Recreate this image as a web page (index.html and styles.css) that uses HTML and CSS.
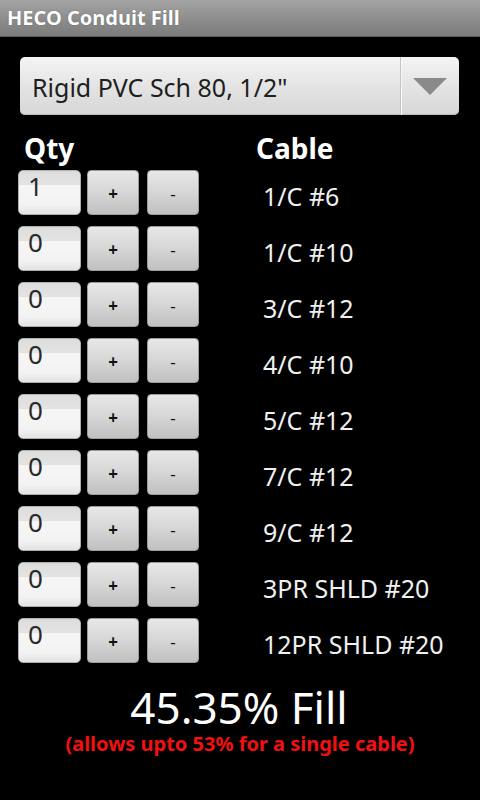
FILE: index.html
```html
<!DOCTYPE html>
<html>
<head>
<meta charset="utf-8">
<link rel="stylesheet" href="styles.css">
</head>
<body>
<div class="titlebar">HECO Conduit Fill</div>
<div class="spinner">
  <div class="spinner-text">Rigid PVC Sch 80, 1/2"</div>
  <div class="spinner-btn"><svg width="36" height="19" viewBox="0 0 36 19"><polygon points="1,1 35,1 18,18" fill="#8a8a8a"/></svg></div>
</div>
<div class="header"><span class="h-qty">Qty</span><span class="h-cable">Cable</span></div>
<div class="rows">
  <div class="row"><div class="field">1</div><div class="btn">+</div><div class="btn minus">-</div><div class="cable">1/C #6</div></div>
  <div class="row"><div class="field">0</div><div class="btn">+</div><div class="btn minus">-</div><div class="cable">1/C #10</div></div>
  <div class="row"><div class="field">0</div><div class="btn">+</div><div class="btn minus">-</div><div class="cable">3/C #12</div></div>
  <div class="row"><div class="field">0</div><div class="btn">+</div><div class="btn minus">-</div><div class="cable">4/C #10</div></div>
  <div class="row"><div class="field">0</div><div class="btn">+</div><div class="btn minus">-</div><div class="cable">5/C #12</div></div>
  <div class="row"><div class="field">0</div><div class="btn">+</div><div class="btn minus">-</div><div class="cable">7/C #12</div></div>
  <div class="row"><div class="field">0</div><div class="btn">+</div><div class="btn minus">-</div><div class="cable">9/C #12</div></div>
  <div class="row"><div class="field">0</div><div class="btn">+</div><div class="btn minus">-</div><div class="cable">3PR SHLD #20</div></div>
  <div class="row"><div class="field">0</div><div class="btn">+</div><div class="btn minus">-</div><div class="cable">12PR SHLD #20</div></div>
</div>
<div class="fill">45.35% Fill</div>
<div class="note">(allows upto 53% for a single cable)</div>
</body>
</html>
```
FILE: styles.css
```css
html, body {
  margin: 0;
  padding: 0;
  background: #000;
  width: 480px;
  height: 800px;
  overflow: hidden;
  font-family: "Noto Sans", "Open Sans", sans-serif;
}
.titlebar {
  background: linear-gradient(#a4a4a4, #8a8a8a 60%, #7c7c7c);
  border-bottom: 1px solid #5a5a5a;
  color: #fff;
  font-weight: bold;
  font-size: 20px;
  line-height: 36px;
  padding-left: 7px;
  box-sizing: border-box;
  height: 37px;
  text-shadow: 0 0 1px #555;
}
.spinner {
  margin: 20px 21px 0 20px;
  height: 58px;
  border-radius: 5px;
  background: linear-gradient(#f4f4f4, #e4e4e4 50%, #d6d6d6);
  display: flex;
  align-items: center;
  box-shadow: inset 0 -1px 0 #bcbcbc;
}
.spinner-text {
  flex: 1;
  padding-left: 12px;
  font-size: 25px;
  color: #1e1e1e;
  padding-top: 2px;
  white-space: nowrap;
}
.spinner-btn {
  width: 58px;
  height: 58px;
  border-left: 1px solid #c4c4c4;
  box-shadow: inset 1px 0 0 #f8f8f8;
  display: flex;
  align-items: center;
  justify-content: center;
}
.header {
  display: flex;
  margin-top: 15px;
  height: 36px;
  color: #fff;
  font-weight: bold;
  font-size: 28px;
  line-height: 36px;
}
.h-qty { margin-left: 24px; width: 232px; }
.rows {
  display: flex;
  flex-direction: column;
  gap: 11px;
  margin-top: 4px;
}
.row {
  display: flex;
  align-items: center;
  height: 45px;
  padding-left: 18px;
}
.field {
  width: 63px;
  height: 45px;
  box-sizing: border-box;
  border-radius: 5px;
  background: linear-gradient(#dcdcdc, #e4e4e4 32%, #f6f6f6 34%, #f2f2f2 80%, #e2e2e2);
  border: 1px solid #b0b0b0;
  color: #2a2a2a;
  font-size: 26px;
  line-height: 30px;
  padding-left: 9px;
}
.btn {
  width: 52px;
  height: 45px;
  box-sizing: border-box;
  margin-left: 6px;
  border-radius: 4px;
  background: linear-gradient(#e8e8e8, #d6d6d6 50%, #c0c0c0);
  border: 1px solid #9c9c9c;
  color: #111;
  font-size: 17px;
  font-weight: bold;
  display: flex;
  align-items: center;
  justify-content: center;
  padding-top: 2px;
}
.btn.minus { margin-left: 8px; font-weight: normal; }
.cable {
  margin-left: 64px;
  color: #f0f0f0;
  font-size: 25px;
  padding-top: 6px;
  white-space: nowrap;
}
.fill {
  margin-top: 20px;
  text-align: center;
  color: #fff;
  font-size: 44px;
  line-height: 48px;
  padding-right: 2px;
}
.note {
  text-align: center;
  color: #f21010;
  font-weight: bold;
  font-size: 20px;
  line-height: 24px;
  margin-top: 1px;
}
```
